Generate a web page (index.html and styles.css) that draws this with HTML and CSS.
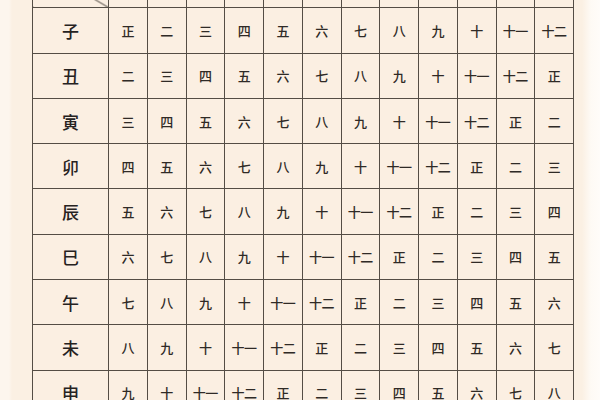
FILE: index.html
```html
<!DOCTYPE html>
<html lang="zh">
<head>
<meta charset="utf-8">
<link rel="stylesheet" href="styles.css">
</head>
<body>
<div class="page">
<table class="grid">
<colgroup><col class="c0"><col span="12" class="cm"></colgroup>
<tr class="head"><th class="diag"><span class="m">月</span><span class="z">支</span></th><th>正</th><th>二</th><th>三</th><th>四</th><th>五</th><th>六</th><th>七</th><th>八</th><th>九</th><th>十</th><th>十一</th><th>十二</th></tr>
<tr><th>子</th><td>正</td><td>二</td><td>三</td><td>四</td><td>五</td><td>六</td><td>七</td><td>八</td><td>九</td><td>十</td><td>十一</td><td>十二</td></tr>
<tr><th>丑</th><td>二</td><td>三</td><td>四</td><td>五</td><td>六</td><td>七</td><td>八</td><td>九</td><td>十</td><td>十一</td><td>十二</td><td>正</td></tr>
<tr><th>寅</th><td>三</td><td>四</td><td>五</td><td>六</td><td>七</td><td>八</td><td>九</td><td>十</td><td>十一</td><td>十二</td><td>正</td><td>二</td></tr>
<tr><th>卯</th><td>四</td><td>五</td><td>六</td><td>七</td><td>八</td><td>九</td><td>十</td><td>十一</td><td>十二</td><td>正</td><td>二</td><td>三</td></tr>
<tr><th>辰</th><td>五</td><td>六</td><td>七</td><td>八</td><td>九</td><td>十</td><td>十一</td><td>十二</td><td>正</td><td>二</td><td>三</td><td>四</td></tr>
<tr><th>巳</th><td>六</td><td>七</td><td>八</td><td>九</td><td>十</td><td>十一</td><td>十二</td><td>正</td><td>二</td><td>三</td><td>四</td><td>五</td></tr>
<tr><th>午</th><td>七</td><td>八</td><td>九</td><td>十</td><td>十一</td><td>十二</td><td>正</td><td>二</td><td>三</td><td>四</td><td>五</td><td>六</td></tr>
<tr><th>未</th><td>八</td><td>九</td><td>十</td><td>十一</td><td>十二</td><td>正</td><td>二</td><td>三</td><td>四</td><td>五</td><td>六</td><td>七</td></tr>
<tr><th>申</th><td>九</td><td>十</td><td>十一</td><td>十二</td><td>正</td><td>二</td><td>三</td><td>四</td><td>五</td><td>六</td><td>七</td><td>八</td></tr>
</table>
</div>
</body>
</html>
```

FILE: styles.css
```css
html, body {
  margin: 0;
  padding: 0;
  height: 100%;
  overflow: hidden;
}
body {
  background: linear-gradient(to right, #fdf6ee 0, #fdf6ee 9px, #fbf0e3 12px, #fbf0e3 582px, #fefaf5 591px, #fffcf9 600px);
  font-family: "Noto Sans CJK SC", "Noto Sans", sans-serif;
}
.page {
  padding-left: 32px;
  margin-top: -38px;
}
.grid {
  border-collapse: collapse;
  table-layout: fixed;
  width: 541px;
  background: #fbefe2;
}
.c0 { width: 76px; }
.cm { width: 38.75px; }
.grid tr { height: 45.3px; }
.grid th, .grid td {
  border: 1.5px solid #544d45;
  padding: 0;
  text-align: center;
  vertical-align: middle;
  line-height: 1;
}
.grid th {
  font-size: 17px;
  font-weight: 500;
  color: #26221f;
}
.grid td {
  font-size: 13px;
  font-weight: 500;
  color: #2f2a26;
  letter-spacing: -0.5px;
}
.head th {
  font-size: 13px;
  vertical-align: top;
  padding-top: 6px;
}
.grid th.diag {
  position: relative;
  background: linear-gradient(to top right, transparent calc(50% - 0.9px), #4a443d 50%, transparent calc(50% + 0.9px));
}
.diag .m {
  position: absolute;
  right: 10px;
  top: 4px;
  font-size: 15px;
}
.diag .z {
  position: absolute;
  left: 40px;
  bottom: 34px;
  font-size: 15px;
}
```
